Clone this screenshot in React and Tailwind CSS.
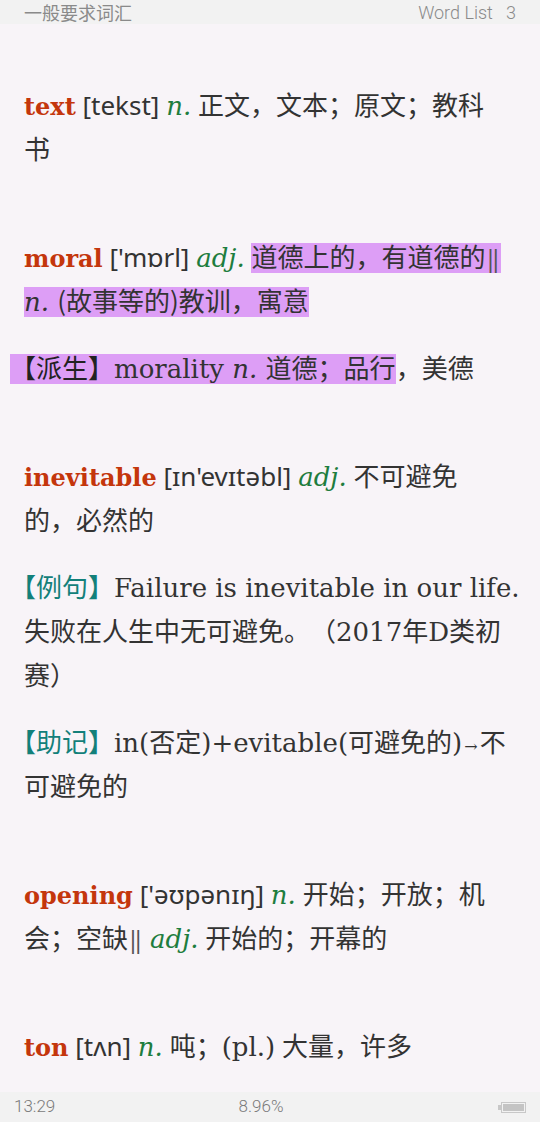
import React from 'react';

const SERIF = "font-['DejaVu_Serif','Noto_Sans_CJK_SC',serif]";
const CJK = "font-['Noto_Sans_CJK_SC',sans-serif]";

function Head({ children }) {
    return <span className={`${SERIF} font-bold text-[#c4360c] text-[24px]`}>{children}</span>;
}

function Phon({ children }) {
    return <span className="font-['Noto_Sans','DejaVu_Sans',sans-serif] text-[#333] text-[26px]">{children}</span>;
}

function Pos({ children }) {
    return <span className={`${SERIF} italic text-[#1e7d3e]`}>{children}</span>;
}

function Zh({ children }) {
    return <span className={CJK}>{children}</span>;
}

function Bar() {
    return <span className="font-['Noto_Sans',sans-serif] text-[#555] text-[24px] px-[1px]">‖</span>;
}

function Tag({ children, teal }) {
    return <span className={`${CJK} ${teal ? 'text-[#13807a]' : 'text-[#222]'}`}>【{children}】</span>;
}

function Mark({ children }) {
    return <span className={`${SERIF} bg-[#dd9ef6]`}>{children}</span>;
}

function Line({ children, hang }) {
    return <div className={`h-[44px] leading-[44px] whitespace-nowrap ${hang ? '-ml-[14px]' : ''}`}>{children}</div>;
}

export default function App() {
    return (
        <div className="w-[540px] h-[1122px] flex flex-col bg-[#f8f4f8] text-[#333] overflow-hidden [text-spacing-trim:space-all]">
            <div className="h-[24px] shrink-0 bg-[#f2f2f2] flex items-center justify-between px-[24px] text-[18px] text-[#8a8a8a]">
                <span className={CJK}>一般要求词汇</span>
                <span className="font-['Roboto',sans-serif] font-light whitespace-pre">Word List   3</span>
            </div>

            <div className="flex-1 min-h-0 px-[24px] pt-[58px] text-[26px]">
                <div>
                    <Line><Head>text</Head> <Phon>[tekst]</Phon> <Pos>n.</Pos> <Zh>正文，文本；原文；教科</Zh></Line>
                    <Line><Zh>书</Zh></Line>
                </div>

                <div className="mt-[64px]">
                    <Line><Head>moral</Head> <Phon>['mɒrl]</Phon> <Pos>adj.</Pos> <Mark><Zh>道德上的，有道德的</Zh><Bar /></Mark></Line>
                    <Line><Mark><span className="italic">n.</span> <Zh>(故事等的)教训，寓意</Zh></Mark></Line>
                </div>
                <div className="mt-[23px]">
                    <Line hang><Mark><Tag>派生</Tag>morality <span className="italic">n.</span> <Zh>道德；品行</Zh></Mark><Zh>，美德</Zh></Line>
                </div>

                <div className="mt-[64px]">
                    <Line><Head>inevitable</Head> <Phon>[ɪn'evɪtəbl]</Phon> <Pos>adj.</Pos> <Zh>不可避免</Zh></Line>
                    <Line><Zh>的，必然的</Zh></Line>
                </div>
                <div className="mt-[23px]">
                    <Line hang><Tag teal>例句</Tag><span className={SERIF}>Failure is inevitable in our life.</span></Line>
                    <Line><Zh>失败在人生中无可避免。（</Zh><span className={SERIF}>2017</span><Zh>年</Zh><span className={SERIF}>D</span><Zh>类初</Zh></Line>
                    <Line><Zh>赛）</Zh></Line>
                </div>
                <div className="mt-[23px]">
                    <Line hang><Tag teal>助记</Tag><span className={SERIF}>in(<Zh>否定</Zh>)+evitable(<Zh>可避免的</Zh>)<span className="text-[16px] px-[2px]">→</span></span><Zh>不</Zh></Line>
                    <Line><Zh>可避免的</Zh></Line>
                </div>

                <div className="mt-[64px]">
                    <Line><Head>opening</Head> <Phon>['əʊpənɪŋ]</Phon> <Pos>n.</Pos> <Zh>开始；开放；机</Zh></Line>
                    <Line><Zh>会；空缺</Zh><Bar /> <Pos>adj.</Pos> <Zh>开始的；开幕的</Zh></Line>
                </div>

                <div className="mt-[64px]">
                    <Line><Head>ton</Head> <Phon>[tʌn]</Phon> <Pos>n.</Pos> <Zh>吨；</Zh><span className={SERIF}>(pl.)</span> <Zh>大量，许多</Zh></Line>
                </div>
            </div>

            <div className="h-[30px] shrink-0 bg-[#f2f2f2] flex items-center px-[14px] text-[17px] text-[#7a7a7a] font-['Roboto',sans-serif] font-light">
                <span className="w-[100px]">13:29</span>
                <span className="flex-1 text-center pr-[18px]">8.96%</span>
                <div className="w-[100px] flex justify-end items-center">
                    <div className="w-[3px] h-[5px] bg-[#c8c8c8]" />
                    <div className="w-[25px] h-[11px] border border-[#c8c8c8] p-[1px]">
                        <div className="w-full h-full bg-[#c4c4c4]" />
                    </div>
                </div>
            </div>
        </div>
    );
}
